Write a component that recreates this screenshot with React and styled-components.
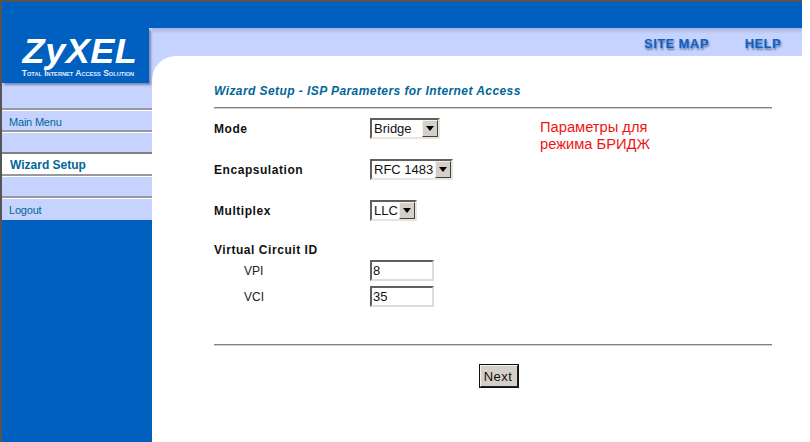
import React from 'react';
import styled, { createGlobalStyle } from 'styled-components';

const GlobalStyle = createGlobalStyle`
  html, body {
    margin: 0;
    padding: 0;
    background: #fff;
    overflow: hidden;
  }
  * {
    box-sizing: border-box;
  }
`;

const blue = '#0060c0';
const pale = '#c6d3ff';
const teal = '#006699';

const Frame = styled.div`
  width: 802px;
  height: 442px;
  border-top: 2px solid #555;
  border-left: 2px solid #555;
  background: ${blue};
  display: flex;
  flex-direction: column;
  font-family: 'Liberation Sans', Arial, sans-serif;
  overflow: hidden;
`;

const TopBar = styled.div`
  height: 26px;
  flex: none;
`;

const Body = styled.div`
  flex: 1;
  display: flex;
  min-height: 0;
`;

const Sidebar = styled.div`
  width: 150px;
  flex: none;
  display: flex;
  flex-direction: column;
`;

const SideTop = styled.div`
  height: 80px;
  background: ${pale};
`;

const Logo = styled.div`
  position: relative;
  width: 147px;
  height: 55px;
  background: ${blue};
  box-shadow: 2px 2px 2px rgba(60, 70, 110, 0.55);
  color: #fff;
  text-align: center;
  padding-top: 7px;
`;

const LogoName = styled.div`
  font-size: 35px;
  line-height: 32px;
  font-weight: 700;
  font-style: italic;
  letter-spacing: 0.5px;
  margin-left: 9px;
  transform: scaleX(1.03);
`;

const LogoTag = styled.div`
  font-size: 9px;
  line-height: 10px;
  font-weight: 700;
  font-variant: small-caps;
  margin: 1px 0 0 5px;
  white-space: nowrap;
  color: #e6ecff;
  transform: scaleX(0.94);
`;

const MenuItem = styled.div`
  height: ${(p) => (p.$last ? '24px' : '22px')};
  border-top: 2px solid ${(p) => (p.$dark ? '#808080' : '#999')};
  box-shadow: inset 0 1px 0 #fff;
  background: ${(p) => (p.$active ? '#fff' : pale)};
  color: ${teal};
  font-size: ${(p) => (p.$active ? '12px' : '11px')};
  font-weight: ${(p) => (p.$active ? 700 : 400)};
  letter-spacing: ${(p) => (p.$active ? '0' : '-0.2px')};
  line-height: ${(p) => (p.$active ? '23px' : '25px')};
  padding-left: ${(p) => (p.$active ? '8px' : '7px')};
`;

const Main = styled.div`
  flex: 1;
  background: ${pale};
  display: flex;
  flex-direction: column;
  min-width: 0;
`;

const NavBand = styled.div`
  height: 28px;
  flex: none;
  display: flex;
  justify-content: flex-end;
  align-items: center;
  gap: 36px;
  padding: 3px 21px 0 0;
  background: linear-gradient(#a9b4dc 0, ${pale} 6px);
`;

const NavLink = styled.a`
  color: #0a62c4;
  font-size: 13px;
  font-weight: 700;
  letter-spacing: 0.4px;
  text-shadow: 1px 2px 2px rgba(20, 40, 90, 0.55);
`;

const Content = styled.div`
  flex: 1;
  background: #fff;
  border-top-left-radius: 24px;
  padding: 28px 30px 0 62px;
`;

const Title = styled.h1`
  margin: 0;
  color: ${teal};
  font-size: 12px;
  line-height: 14px;
  font-weight: 700;
  font-style: italic;
  letter-spacing: 0.43px;
`;

const Rule = styled.div`
  height: 2px;
  background: linear-gradient(#808080 50%, #d4d0c8 50%);
  margin-top: ${(p) => p.$top}px;
`;

const FormGrid = styled.div`
  display: grid;
  grid-template-columns: 156px 170px 1fr;
  grid-auto-rows: min-content;
  align-items: end;
  margin-top: 9px;
`;

const Label = styled.div`
  grid-column: 1;
  color: #111;
  font-size: 12px;
  font-weight: 700;
  letter-spacing: 0.55px;
  height: 21px;
  line-height: 23px;
  margin-top: ${(p) => p.$top || 0}px;
`;

const SubLabel = styled.div`
  grid-column: 1;
  color: #222;
  font-size: 12px;
  padding-left: 30px;
  height: 21px;
  line-height: 22px;
  margin-top: ${(p) => p.$top || 0}px;
`;

const SelectBox = styled.div`
  grid-column: 2;
  width: ${(p) => p.$w}px;
  height: 21px;
  display: flex;
  align-items: center;
  justify-content: space-between;
  background: #fff;
  border: 2px solid;
  border-color: #5f5f5f #e8e5df #e8e5df #5f5f5f;
  color: #111;
  font-size: 13px;
  padding: 0 0 0 2px;
`;

const SelectArrow = styled.span`
  width: 16px;
  height: 17px;
  background: #d4d0c8;
  border: 1px solid;
  border-color: #f4f2ee #404040 #404040 #f4f2ee;
  display: flex;
  align-items: center;
  justify-content: center;
`;

const Note = styled.div`
  grid-column: 3;
  grid-row: 1 / span 2;
  align-self: start;
  padding-top: 1px;
  color: #f01414;
  font-size: 14.7px;
  line-height: 17px;
`;

const TextField = styled.input`
  grid-column: 2;
  width: 64px;
  height: 21px;
  border: 2px solid;
  border-color: #5f5f5f #e0ddd6 #e0ddd6 #5f5f5f;
  padding: 0 0 0 1px;
  font: 13px 'Liberation Sans', Arial, sans-serif;
  color: #111;
  background: #fff;
  outline: none;
`;

const Footer = styled.div`
  display: flex;
  justify-content: center;
  margin-top: 18px;
  padding-left: 12px;
`;

const NextButton = styled.button`
  width: 40px;
  height: 24px;
  padding: 0 2px 0 0;
  background: #d4d0c8;
  border: 2px solid;
  border-color: #f4f2ee #222 #222 #f4f2ee;
  outline: 1px solid #111;
  outline-offset: -1px;
  color: #111;
  font: 13px 'Liberation Sans', Arial, sans-serif;
  letter-spacing: 0.5px;
`;

const menu = [
  { label: 'Main Menu' },
  { label: '' },
  { label: 'Wizard Setup', active: true, dark: true },
  { label: '' },
  { label: 'Logout', last: true },
];

const Select = ({ value, width }) => (
  <SelectBox $w={width}>
    <span>{value}</span>
    <SelectArrow>
      <svg width="8" height="5" viewBox="0 0 8 5">
        <path d="M0 0h8L4 5z" fill="#000" />
      </svg>
    </SelectArrow>
  </SelectBox>
);

const App = () => (
  <>
    <GlobalStyle />
    <Frame>
      <TopBar />
      <Body>
        <Sidebar>
          <SideTop>
            <Logo>
              <LogoName>ZyXEL</LogoName>
              <LogoTag>Total Internet Access Solution</LogoTag>
            </Logo>
          </SideTop>
          {menu.map((item, i) => (
            <MenuItem key={i} $active={item.active} $dark={item.dark} $last={item.last}>
              {item.label}
            </MenuItem>
          ))}
        </Sidebar>
        <Main>
          <NavBand>
            <NavLink>SITE MAP</NavLink>
            <NavLink>HELP</NavLink>
          </NavBand>
          <Content>
            <Title>Wizard Setup - ISP Parameters for Internet Access</Title>
            <Rule $top={9} />
            <FormGrid>
              <Label>Mode</Label>
              <Select value="Bridge" width={70} />
              <Note>
                Параметры для
                <br />
                режима БРИДЖ
              </Note>
              <Label $top={20}>Encapsulation</Label>
              <Select value="RFC 1483" width={83} />
              <Label $top={20}>Multiplex</Label>
              <Select value="LLC" width={47} />
              <Label $top={18}>Virtual Circuit ID</Label>
              <div />
              <SubLabel>VPI</SubLabel>
              <TextField defaultValue="8" />
              <SubLabel $top={5}>VCI</SubLabel>
              <TextField defaultValue="35" />
            </FormGrid>
            <Rule $top={37} />
            <Footer>
              <NextButton type="button">Next</NextButton>
            </Footer>
          </Content>
        </Main>
      </Body>
    </Frame>
  </>
);

export default App;
